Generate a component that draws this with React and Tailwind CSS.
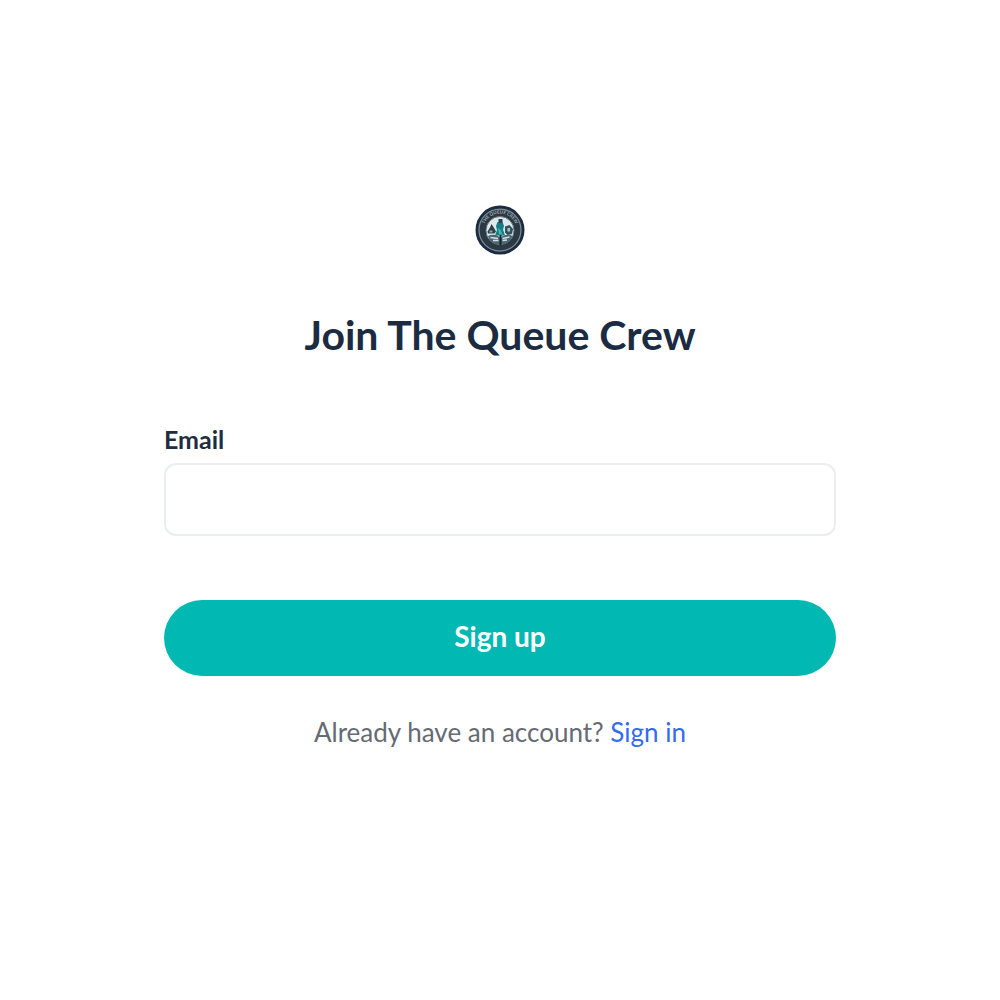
import React, { useState } from 'react';

/**
 * Round club badge with the name set on an arc above the emblem
 */
const CrewLogo = () => (
  <svg viewBox="0 0 100 100" className="size-[50px]" role="img" aria-label="The Queue Crew">
    <defs>
      <path id="badge-arc" d="M17 50a33 33 0 0 1 66 0" />
    </defs>
    <circle cx="50" cy="50" r="49" fill="#1b2b40" />
    <circle cx="50" cy="50" r="42" fill="#2b3945" stroke="#7f8c96" strokeWidth="2.5" />
    <text
      fill="#a3afb6"
      fontSize="9"
      fontWeight="700"
      fontFamily="Lato, sans-serif"
      textAnchor="middle"
    >
      <textPath href="#badge-arc" startOffset="50%">
        THE QUEUE CREW
      </textPath>
    </text>
    <circle cx="50" cy="51" r="28" fill="#dfe8ea" stroke="#66757d" strokeWidth="2" />
    {/* left figure */}
    <path d="M33 38l4 6 5 9-3 4H26l-1-4 5-8z" fill="#29404c" />
    <path d="M29 51h6v4h-6z" fill="#8aa3aa" />
    {/* right figure */}
    <path d="M60 43l9-3 7 8-2 10-9 2-5-5z" fill="#34505c" />
    <path d="M65 46h5v7h-5z" fill="#a9c3c8" />
    {/* middle figure */}
    <path d="M45 34h10l3 8-2 7 4 12H40l4-11-2-8z" fill="#167d82" />
    <path d="M47 28h8v8h-8z" fill="#244552" />
    <path d="M46 46l5 3 4 10h-7z" fill="#43b3ad" />
    {/* ground and stem */}
    <path d="M26 62q12-6 23 2l2 3 3-4q10-6 21-1-7 17-25 17T26 62z" fill="#4a6670" />
    <path d="M31 65l15 2M55 67l14-3M36 71l11 0M55 71l9-1" stroke="#d4e0e2" strokeWidth="3" />
    <path d="M51 60v20" stroke="#122532" strokeWidth="4" />
  </svg>
);

const App = () => {
  const [email, setEmail] = useState('');

  const handleSubmit = (e) => {
    e.preventDefault();
  };

  return (
    <main className="flex min-h-screen flex-col items-center justify-center bg-white px-6 pb-12 font-['Lato',sans-serif]">
      <CrewLogo />

      <h1 className="mt-14 text-center text-[41px] leading-[48px] font-bold text-[#1b2b42]">
        Join The Queue Crew
      </h1>

      <form onSubmit={handleSubmit} className="mt-16 w-full max-w-2xl">
        <label
          htmlFor="email"
          className="block text-[25px] leading-8 font-bold text-[#1f2d40]"
        >
          Email
        </label>
        <input
          id="email"
          name="email"
          type="email"
          autoComplete="email"
          value={email}
          onChange={(e) => setEmail(e.target.value)}
          className="mt-2 block h-[73px] w-full rounded-xl border-2 border-[#ebeef0] bg-white px-5 text-2xl text-[#1f2d40] outline-none focus:border-[#02b8b2]"
        />

        <button
          type="submit"
          className="mt-16 h-[76px] w-full cursor-pointer rounded-full bg-[#02b8b2] pb-1 text-[28px] font-bold text-white"
        >
          Sign up
        </button>
      </form>

      <p className="mt-10 text-center text-[26px] leading-8 text-[#666b73]">
        Already have an account?{' '}
        <a href="#signin" className="text-[#356bf0]">
          Sign in
        </a>
      </p>
    </main>
  );
};

export default App;
